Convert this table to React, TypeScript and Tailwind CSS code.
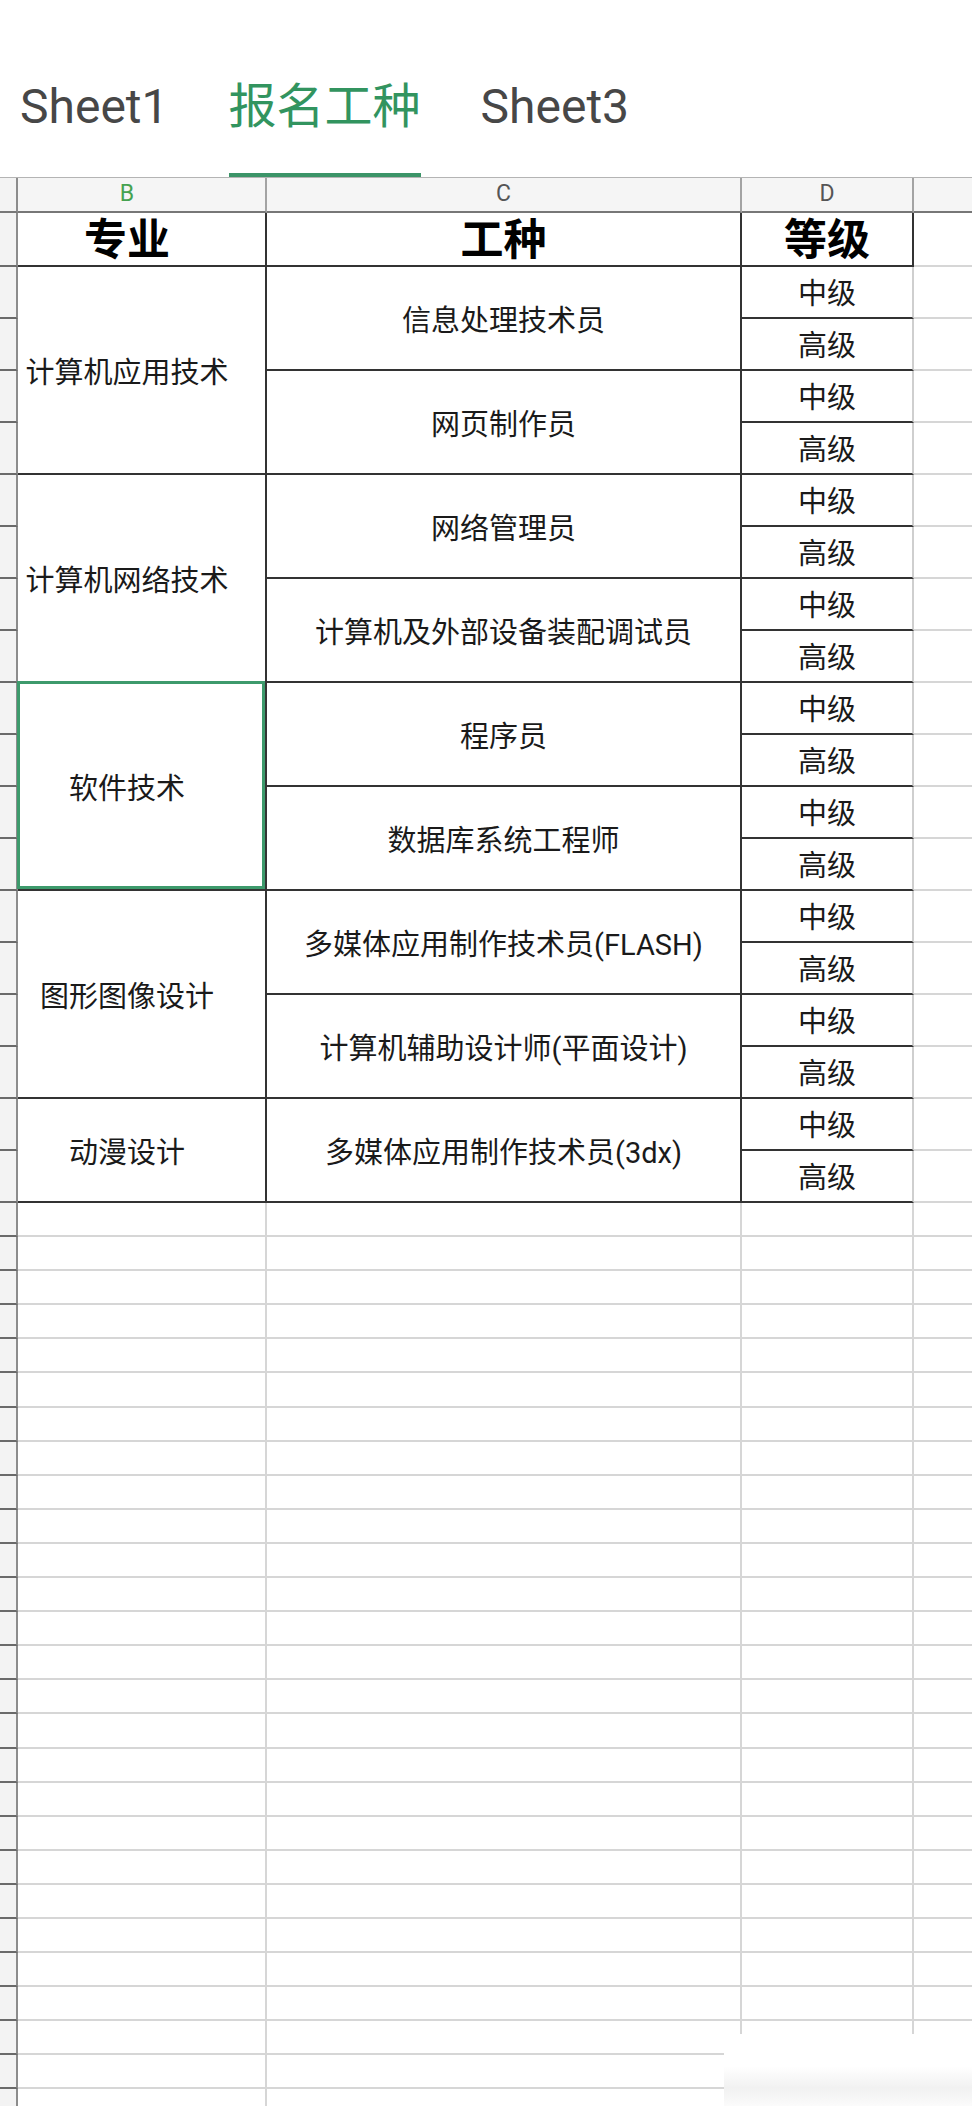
import React from "react";

type Group = { major: string; jobs: string[]; selected?: boolean };

const groups: Group[] = [
  { major: "计算机应用技术", jobs: ["信息处理技术员", "网页制作员"] },
  { major: "计算机网络技术", jobs: ["网络管理员", "计算机及外部设备装配调试员"] },
  { major: "软件技术", jobs: ["程序员", "数据库系统工程师"], selected: true },
  { major: "图形图像设计", jobs: ["多媒体应用制作技术员(FLASH)", "计算机辅助设计师(平面设计)"] },
  { major: "动漫设计", jobs: ["多媒体应用制作技术员(3dx)"] },
];

function Tab({ label, active }: { label: string; active?: boolean }) {
  return (
    <div className="flex flex-col">
      <div
        className={
          "text-[48px] leading-[48px] whitespace-nowrap " +
          (active ? "text-[#32945f]" : "text-[#474747]")
        }
      >
        {label}
      </div>
      <div className={"mt-[42px] h-[4px] " + (active ? "bg-[#3b9468]" : "bg-transparent")} />
    </div>
  );
}

function RowHead({ h }: { h: string }) {
  return <div className={h + " w-[18px] shrink-0 bg-[#f3f3f3] border-r-2 border-r-[#8c8c8c] border-b-2 border-b-[#6a6a6a]"} />;
}

function GroupBlock({ g }: { g: Group }) {
  const rows = g.jobs.length * 2;
  return (
    <div className="flex">
      <div className="flex flex-col w-[18px] shrink-0">
        {Array.from({ length: rows }).map((_, i) => (
          <RowHead key={i} h="h-[52px]" />
        ))}
      </div>
      <div className="relative w-[249px] shrink-0 flex items-center justify-center pr-[29px] pt-[8px] border-r-2 border-b-2 border-[#333] text-[29px] text-[#1a1a1a] whitespace-nowrap">
        {g.major}
        {g.selected && (
          <div className="absolute -top-[2px] -left-px right-0 bottom-0 border-[3px] border-[#3d9a6c]" />
        )}
      </div>
      <div className="w-[475px] shrink-0 flex flex-col">
        {g.jobs.map((j) => (
          <div
            key={j}
            className="h-[104px] flex items-center justify-center pt-[8px] border-r-2 border-b-2 border-[#333] text-[29px] text-[#1a1a1a] whitespace-nowrap"
          >
            {j}
          </div>
        ))}
      </div>
      <div className="w-[172px] shrink-0 flex flex-col">
        {g.jobs.flatMap((j) =>
          ["中级", "高级"].map((lv) => (
            <div
              key={j + lv}
              className="h-[52px] flex items-center justify-center pt-[6px] border-b-2 border-b-[#333] border-r-2 border-r-[#cfcfcf] text-[29px] text-[#1a1a1a]"
            >
              {lv}
            </div>
          ))
        )}
      </div>
      <div className="flex-1 flex flex-col">
        {Array.from({ length: rows }).map((_, i) => (
          <div key={i} className="h-[52px] border-b-2 border-[#d6d6d6]" />
        ))}
      </div>
    </div>
  );
}

export default function App() {
  return (
    <div className="relative w-[972px] h-[2106px] overflow-hidden bg-white font-['Roboto','Noto_Sans_CJK_SC',sans-serif]">
      {/* sheet tabs */}
      <div className="h-[177px] flex items-end pl-[20px] gap-[60px]">
        <Tab label="Sheet1" />
        <Tab label="报名工种" active />
        <Tab label="Sheet3" />
      </div>

      {/* column letters */}
      <div className="flex h-[36px] border-t border-[#b4b4b4]">
        <div className="w-[18px] shrink-0 bg-[#f3f3f3] border-r-2 border-r-[#8c8c8c] border-b-2 border-b-[#777]" />
        <div className="w-[249px] shrink-0 bg-[#f5f5f5] flex items-center justify-center pr-[29px] border-r-2 border-r-[#a3a3a3] border-b-2 border-b-[#777] text-[23px] text-[#45a250]">
          B
        </div>
        <div className="w-[475px] shrink-0 bg-[#f5f5f5] flex items-center justify-center border-r-2 border-r-[#a3a3a3] border-b-2 border-b-[#777] text-[23px] text-[#555]">
          C
        </div>
        <div className="w-[172px] shrink-0 bg-[#f5f5f5] flex items-center justify-center border-r-2 border-r-[#a3a3a3] border-b-2 border-b-[#777] text-[23px] text-[#555]">
          D
        </div>
        <div className="flex-1 bg-[#f5f5f5] border-b-2 border-b-[#777]" />
      </div>

      {/* header row */}
      <div className="flex h-[54px]">
        <RowHead h="h-[54px]" />
        <div className="w-[249px] shrink-0 flex items-center justify-center pr-[29px] pt-[2px] border-r-2 border-b-2 border-[#333] text-[43px] font-bold text-black">
          专业
        </div>
        <div className="w-[475px] shrink-0 flex items-center justify-center pt-[2px] border-r-2 border-b-2 border-[#333] text-[43px] font-bold text-black">
          工种
        </div>
        <div className="w-[172px] shrink-0 flex items-center justify-center pt-[2px] border-r-2 border-b-2 border-[#333] text-[43px] font-bold text-black">
          等级
        </div>
        <div className="flex-1 border-b-2 border-[#d6d6d6]" />
      </div>

      {/* data */}
      {groups.map((g) => (
        <GroupBlock key={g.major} g={g} />
      ))}

      {/* empty rows */}
      {Array.from({ length: 27 }).map((_, i) => (
        <div key={i} className="flex h-[34.1px]">
          <RowHead h="h-full" />
          <div className="w-[249px] shrink-0 border-r-2 border-b-2 border-[#d6d6d6]" />
          <div className="w-[475px] shrink-0 border-r-2 border-b-2 border-[#d6d6d6]" />
          <div className="w-[172px] shrink-0 border-r-2 border-b-2 border-[#d6d6d6]" />
          <div className="flex-1 border-b-2 border-[#d6d6d6]" />
        </div>
      ))}

      {/* erased corner */}
      <div className="absolute left-[724px] top-[2034px] right-0 bottom-0 bg-[linear-gradient(to_bottom,#ffffff_0%,#ffffff_45%,#f1f1f1_75%,#fbfbfb_100%)]" />
    </div>
  );
}
